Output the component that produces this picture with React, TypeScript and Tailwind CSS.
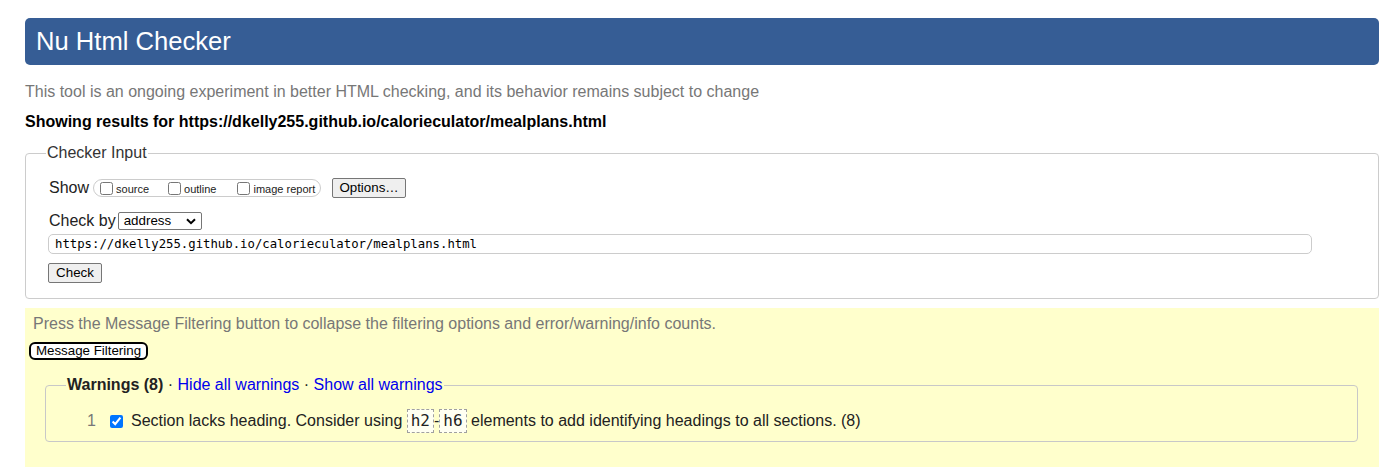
import React from "react";

function Chevron() {
  return (
    <svg width="10" height="7" viewBox="0 0 10 7" className="block">
      <path d="M1 1.2 L5 5.2 L9 1.2" fill="none" stroke="#000" strokeWidth="2" />
    </svg>
  );
}

function Code({ children }: { children: React.ReactNode }) {
  return (
    <span className="inline-block border border-dashed border-[#a0a0a0] bg-[#fffff2] px-[3px] py-[2px] leading-[18px] text-[16px] text-[#222]" style={{ fontFamily: '"DejaVu Sans Mono", monospace' }}>
      {children}
    </span>
  );
}

export default function App() {
  return (
    <div className="w-[1389px] h-[470px] overflow-hidden bg-white pt-[18px] pl-[25px] pr-[10px] text-[16px] text-[#222]" style={{ fontFamily: '"Liberation Sans", Arial, sans-serif' }}>
      <div className="h-[47px] rounded-[5px] bg-[#365d95] flex items-center pl-[11px] text-white text-[25.6px] leading-none">
        Nu Html Checker
      </div>
      <p className="mt-[18px] leading-[18px] text-[#777]">
        This tool is an ongoing experiment in better HTML checking, and its behavior remains subject to change
      </p>
      <p className="mt-[12px] leading-[18px] font-bold text-[#000]">
        Showing results for https://dkelly255.github.io/calorieculator/mealplans.html
      </p>

      <fieldset className="mt-[13px] border border-[#cccccc] rounded-[4px] pl-[20px] pb-[15px]">
        <legend className="px-[1px] leading-[18px] text-[#333]">Checker Input</legend>
        <div className="mt-[16px] h-[20px] flex items-center pl-[3px]">
          <span className="leading-[18px]">Show</span>
          <div className="ml-[4px] h-[18px] w-[228px] border border-[#cccccc] rounded-[9px] flex items-center pl-[6px] text-[11px] text-[#222]">
            <input type="checkbox" readOnly className="w-[13px] h-[13px] m-0" />
            <span className="ml-[3px] mt-[3px]">source</span>
            <input type="checkbox" readOnly className="ml-[19px] w-[13px] h-[13px] m-0" />
            <span className="ml-[3px] mt-[3px]">outline</span>
            <input type="checkbox" readOnly className="ml-[21px] w-[13px] h-[13px] m-0" />
            <span className="ml-[3px] mt-[3px]">image report</span>
          </div>
          <button className="ml-[11px] h-[20px] w-[74px] bg-[#efefef] border border-[#767676] rounded-[2px] text-[13.33px] text-black leading-none flex items-center justify-center">
            Options…
          </button>
        </div>
        <div className="mt-[13px] h-[20px] flex items-center pl-[3px]">
          <span className="leading-[18px]">Check by</span>
          <div className="ml-[2px] h-[18px] w-[84px] border border-[#767676] rounded-[2px] bg-white flex items-center justify-between pl-[5px] pr-[5px] text-[13.33px] text-black">
            <span>address</span>
            <Chevron />
          </div>
        </div>
        <div className="mt-[3px] ml-[2px] h-[20px] w-[1264px] border border-[#cccccc] rounded-[5px] flex items-center pl-[6px] text-[12.3px] text-black" style={{ fontFamily: '"DejaVu Sans Mono", monospace' }}>
          https://dkelly255.github.io/calorieculator/mealplans.html
        </div>
        <button className="mt-[9px] ml-[2px] h-[20px] w-[54px] bg-[#efefef] border border-[#767676] rounded-[2px] text-[13.33px] text-black leading-none flex items-center justify-center">
          Check
        </button>
      </fieldset>

      <div className="mt-[9px] bg-[#ffffcc] pl-[4px] pt-[7px] pb-[25px]">
        <p className="pl-[4px] leading-[18px] text-[#777]">
          Press the Message Filtering button to collapse the filtering options and error/warning/info counts.
        </p>
        <button className="mt-[9px] h-[18px] w-[119px] border-2 border-black rounded-[6px] bg-white text-[13.33px] text-black leading-none flex items-center justify-center">
          Message Filtering
        </button>
        <fieldset className="mt-[16px] ml-[16px] mr-[21px] border border-[#c8c8c8] rounded-[4px] pl-[20px] pb-[8px]">
          <legend className="px-[1px] leading-[18px]">
            <span className="font-bold text-[#222]">Warnings (8)</span>
            <span className="text-[#222]"> · </span>
            <span className="text-[#0000ee]">Hide all warnings</span>
            <span className="text-[#222]"> · </span>
            <span className="text-[#0000ee]">Show all warnings</span>
          </legend>
          <div className="mt-[15px] h-[24px] flex items-center -ml-[20px]">
            <span className="w-[50px] text-right text-[#777] leading-[18px]">1</span>
            <input type="checkbox" readOnly checked className="ml-[14px] w-[13px] h-[13px] m-0 accent-[#0075ff]" />
            <span className="ml-[8px] leading-[18px] whitespace-pre">
              Section lacks heading. Consider using <Code>h2</Code>-<Code>h6</Code> elements to add identifying headings to all sections. (8)
            </span>
          </div>
        </fieldset>
      </div>
    </div>
  );
}
